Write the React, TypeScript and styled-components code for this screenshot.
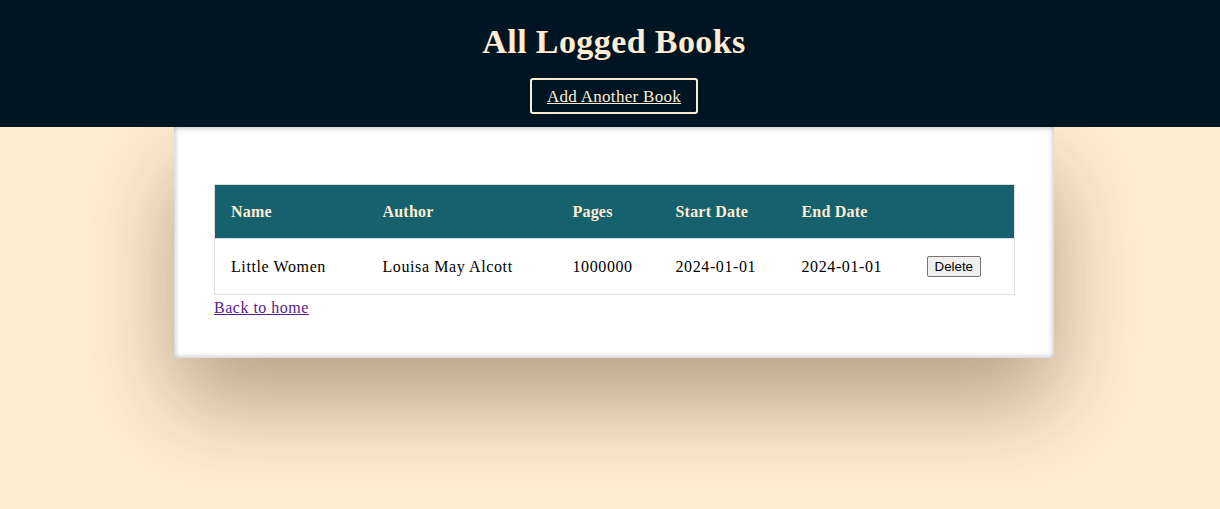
import React from "react";
import styled, { createGlobalStyle } from "styled-components";

const GlobalStyle = createGlobalStyle`
  body {
    margin: 0;
    background: #ffecd1;
    font-family: "Liberation Serif", "DejaVu Serif", serif;
    color: #000;
  }
`;

const Page = styled.div`
  min-height: 509px;
  display: flex;
  flex-direction: column;
  align-items: center;
`;

const Header = styled.header`
  align-self: stretch;
  background: #001524;
  display: flex;
  flex-direction: column;
  align-items: center;
  padding: 23px 0 13px 8px;
  position: relative;
  z-index: 1;
`;

const Title = styled.h1`
  margin: 0 0 18px;
  color: #ffecd1;
  font-size: 34px;
  line-height: 37px;
  font-weight: bold;
  letter-spacing: 0.4px;
`;

const HeaderLink = styled.a`
  display: inline-flex;
  align-items: center;
  height: 36px;
  box-sizing: border-box;
  padding: 1px 15px 0;
  border: 2px solid #ffecd1;
  border-radius: 3px;
  color: #ffecd1;
  font-size: 17px;
  letter-spacing: 0.3px;
  text-decoration: underline;
`;

const Card = styled.main`
  width: 880px;
  margin-left: 8px;
  box-sizing: border-box;
  padding: 57px 40px 40px;
  background: #fff;
  box-shadow: inset 0 0 6px rgba(0, 21, 36, 0.35), 0 45px 90px rgba(60, 40, 20, 0.38);
`;

const Table = styled.table`
  width: 800px;
  border-collapse: collapse;
  border: 1px solid #dddddd;
  table-layout: fixed;
`;

const HeadCell = styled.th<{ $w: number }>`
  width: ${(p) => p.$w}px;
  height: 54px;
  box-sizing: border-box;
  padding: 0 16px;
  background: #15616d;
  color: #ffecd1;
  text-align: left;
  font-size: 16px;
  font-weight: bold;
  letter-spacing: 0.2px;
`;

const Cell = styled.td`
  height: 56px;
  box-sizing: border-box;
  padding: 0 16px;
  font-size: 16px;
  letter-spacing: 0.6px;
  border-top: 1px solid #dddddd;
`;

const DeleteButton = styled.button`
  font-family: "Liberation Sans", Arial, sans-serif;
  font-size: 13.33px;
  letter-spacing: 0;
  padding: 1px 7px;
  height: 21px;
  background: #efefef;
  border: 1px solid #767676;
  border-radius: 2px;
  color: #000;
`;

const BackLink = styled.a`
  display: block;
  margin-top: 3px;
  color: #551a8b;
  font-size: 16px;
  line-height: 20px;
  letter-spacing: 0.5px;
  text-decoration: underline;
`;

const columns = [
  { label: "Name", w: 152 },
  { label: "Author", w: 190 },
  { label: "Pages", w: 103 },
  { label: "Start Date", w: 126 },
  { label: "End Date", w: 125 },
  { label: "", w: 104 },
];

const books = [
  { name: "Little Women", author: "Louisa May Alcott", pages: 1000000, start: "2024-01-01", end: "2024-01-01" },
];

export default function App() {
  return (
    <Page>
      <GlobalStyle />
      <Header>
        <Title>All Logged Books</Title>
        <HeaderLink href="#">Add Another Book</HeaderLink>
      </Header>
      <Card>
        <Table>
          <thead>
            <tr>
              {columns.map((c, i) => (
                <HeadCell key={i} $w={c.w}>{c.label}</HeadCell>
              ))}
            </tr>
          </thead>
          <tbody>
            {books.map((b, i) => (
              <tr key={i}>
                <Cell>{b.name}</Cell>
                <Cell>{b.author}</Cell>
                <Cell>{b.pages}</Cell>
                <Cell>{b.start}</Cell>
                <Cell>{b.end}</Cell>
                <Cell>
                  <DeleteButton>Delete</DeleteButton>
                </Cell>
              </tr>
            ))}
          </tbody>
        </Table>
        <BackLink href="#">Back to home</BackLink>
      </Card>
    </Page>
  );
}
